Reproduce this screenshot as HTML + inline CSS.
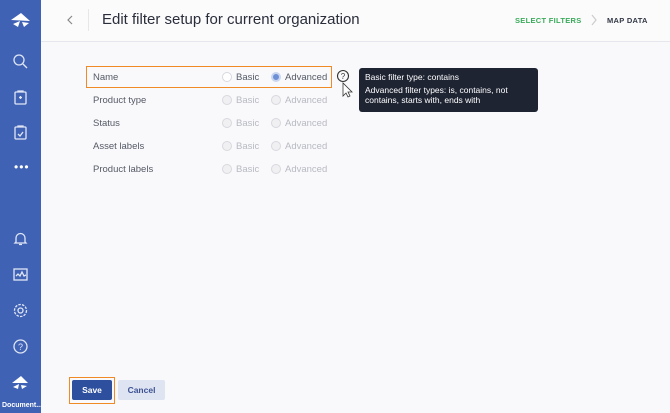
<!DOCTYPE html><html><head><style>
body{margin:0;width:670px;height:413px;background:#f9f9fb;font-family:"Liberation Sans",sans-serif;position:relative;overflow:hidden}
.sb{position:absolute;left:0;top:0;width:41px;height:413px;background:#4062b4}
.ic{position:absolute;left:12px;width:17px;height:17px}
.hdr{position:absolute;left:41px;top:0;right:0;height:41px;border-bottom:1px solid #e6e7ec;background:#fbfbfc}
.t{position:absolute;font-size:9.5px;color:#555a66}
.r{position:absolute;width:10px;height:10px;border-radius:50%;border:1px solid #d8d9de;background:#f0f0f3;box-sizing:border-box}
.g{color:#b8bac2}
</style></head><body>
<div class="sb">
<svg class="ic" style="top:10px;left:9px;width:23px;height:20px" viewBox="0 0 23 20"><path d="M2 10 L12 3 L21 11 Z M4 14 L11 11 L9 17 Z M13 12 L20 13 L15 17 Z" fill="#fff"/></svg>
<svg class="ic" style="top:53px" viewBox="0 0 17 17" fill="none" stroke="#dfe6f5" stroke-width="1.3"><circle cx="7" cy="7" r="5"/><path d="M11 11l4 4"/></svg>
<svg class="ic" style="top:89px" viewBox="0 0 17 17" fill="none" stroke="#dfe6f5" stroke-width="1.3"><rect x="3" y="3" width="11" height="12" rx="1"/><path d="M6 3v-1h5v1M8.5 7v3M7 8.5h3"/></svg>
<svg class="ic" style="top:124px" viewBox="0 0 17 17" fill="none" stroke="#dfe6f5" stroke-width="1.3"><rect x="3" y="3" width="11" height="12" rx="1"/><path d="M6 3v-1h5v1M6 10l2 2 3-4"/></svg>
<div style="position:absolute;left:14px;top:163px;color:#fff;font-size:12px;letter-spacing:1px;line-height:8px">•••</div>
<svg class="ic" style="top:230px" viewBox="0 0 17 17" fill="none" stroke="#dfe6f5" stroke-width="1.3"><path d="M4 12V8a4.5 4.5 0 019 0v4l1 1H3z M7 14.5h3"/></svg>
<svg class="ic" style="top:266px" viewBox="0 0 17 17" fill="none" stroke="#dfe6f5" stroke-width="1.3"><rect x="2" y="3" width="13" height="11"/><path d="M4 10l2-2 2 2 2-4 2 4 2-1"/></svg>
<svg class="ic" style="top:302px" viewBox="0 0 17 17" fill="none" stroke="#dfe6f5" stroke-width="1.3"><circle cx="8.5" cy="8.5" r="2.5"/><circle cx="8.5" cy="8.5" r="6" stroke-dasharray="2.5 1.2"/></svg>
<svg class="ic" style="top:338px" viewBox="0 0 17 17" fill="none" stroke="#dfe6f5" stroke-width="1.3"><circle cx="8.5" cy="8.5" r="6.5"/><text x="8.5" y="12" font-size="9" text-anchor="middle" fill="#dfe6f5" stroke="none" font-family="Liberation Sans">?</text></svg>
<svg class="ic" style="top:374px;left:10px;width:20px" viewBox="0 0 20 17"><path d="M2 9 L11 2 L18 9 Z M3 13 L9 10 L8 15 Z M11 11 L17 12 L12 15 Z" fill="#fff"/></svg>
<div style="position:absolute;left:2px;top:402px;font-size:7px;color:#fff;font-weight:bold">Document...</div>
</div>
<div class="hdr">
<svg style="position:absolute;left:25px;top:15px" width="8" height="10" viewBox="0 0 8 10"><path d="M6 1L2 5l4 4" fill="none" stroke="#888" stroke-width="1.2"/></svg>
<div style="position:absolute;left:47px;top:9px;width:1px;height:22px;background:#e6e7ec"></div>
<div style="position:absolute;left:61px;top:11px;font-size:15px;color:#2a2e3a">Edit filter setup for current organization</div>
<div style="position:absolute;left:474px;top:16px;font-size:7.5px;font-weight:bold;color:#3aab5a;letter-spacing:.3px">SELECT FILTERS</div>
<svg style="position:absolute;left:549px;top:14px" width="8" height="12" viewBox="0 0 8 12"><path d="M2 1l4 5-4 5" fill="none" stroke="#ccc" stroke-width="1.2"/></svg>
<div style="position:absolute;left:566px;top:16px;font-size:7.5px;font-weight:bold;color:#333845;letter-spacing:.3px">MAP DATA</div>
</div>
<div style="position:absolute;left:86px;top:66px;width:244px;height:20px;border:1.5px solid #f08a24"></div>
<div class="t" style="left:93px;top:72px">Name</div>
<div class="r" style="left:222px;top:72px;background:#fff"></div><div class="t" style="left:236px;top:72px">Basic</div>
<div class="r" style="left:271px;top:72px;background:#6d8fd6;border:2px solid #c9d6f0"></div><div class="t" style="left:285px;top:72px">Advanced</div>
<div class="t" style="left:93px;top:95px">Product type</div>
<div class="r" style="left:222px;top:95px"></div><div class="t g" style="left:236px;top:95px">Basic</div><div class="r" style="left:271px;top:95px"></div><div class="t g" style="left:285px;top:95px">Advanced</div>
<div class="t" style="left:93px;top:118px">Status</div>
<div class="r" style="left:222px;top:118px"></div><div class="t g" style="left:236px;top:118px">Basic</div><div class="r" style="left:271px;top:118px"></div><div class="t g" style="left:285px;top:118px">Advanced</div>
<div class="t" style="left:93px;top:141px">Asset labels</div>
<div class="r" style="left:222px;top:141px"></div><div class="t g" style="left:236px;top:141px">Basic</div><div class="r" style="left:271px;top:141px"></div><div class="t g" style="left:285px;top:141px">Advanced</div>
<div class="t" style="left:93px;top:164px">Product labels</div>
<div class="r" style="left:222px;top:164px"></div><div class="t g" style="left:236px;top:164px">Basic</div><div class="r" style="left:271px;top:164px"></div><div class="t g" style="left:285px;top:164px">Advanced</div>
<svg style="position:absolute;left:336px;top:69px" width="20" height="30" viewBox="0 0 20 30"><circle cx="7" cy="7" r="5.5" fill="none" stroke="#333" stroke-width="1.1"/><text x="7" y="10" font-size="8" text-anchor="middle" fill="#333" font-family="Liberation Sans">?</text><path d="M7 14 L7 27 L10 24 L12 28 L14 27 L12 23 L16 23 Z" fill="#fff" stroke="#333" stroke-width=".8"/></svg>
<div style="position:absolute;left:359px;top:68px;width:179px;height:44px;background:#1f2433;border-radius:3px;color:#fff;font-size:8.5px;line-height:10.5px;padding:4px 6px;box-sizing:border-box">Basic filter type: contains<div style="margin-top:2px">Advanced filter types: is, contains, not contains, starts with, ends with</div></div>
<div style="position:absolute;left:69px;top:377px;width:44px;height:25px;border:1.5px solid #f08a24"></div>
<div style="position:absolute;left:72px;top:380px;width:40px;height:20px;background:#2e4f9e;border-radius:2px;color:#fff;font-size:8.5px;font-weight:bold;text-align:center;line-height:20px">Save</div>
<div style="position:absolute;left:118px;top:380px;width:47px;height:20px;background:#dfe4f2;border-radius:2px;color:#3c5294;font-size:8.5px;font-weight:bold;text-align:center;line-height:20px">Cancel</div>
</body></html>
